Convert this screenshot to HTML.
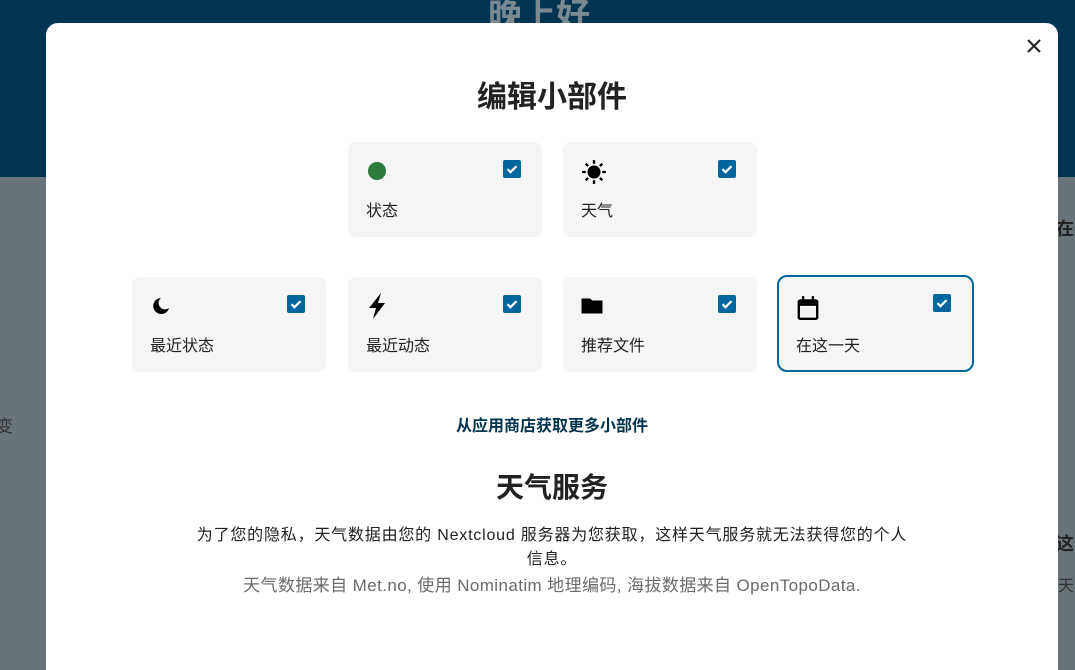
<!DOCTYPE html>
<html><head><meta charset="utf-8"><style>
*{margin:0;padding:0;box-sizing:border-box}
html,body{width:1075px;height:670px;overflow:hidden}
body{position:relative;font-family:"Liberation Sans","Noto Sans CJK SC",sans-serif;background:#69747a}
.top{position:absolute;left:0;top:0;width:1075px;height:177px;background:#003452}
.hello{position:absolute;left:488px;top:-12px;font-size:34px;font-weight:bold;color:#7a8890}
.bgt{position:absolute;color:#222;font-size:18px;white-space:nowrap}
.modal{position:absolute;left:46px;top:23px;width:1012px;height:647px;background:#fff;border-radius:12px 12px 0 0}
.close{position:absolute;left:1024px;top:36px}
h1{position:absolute;left:0;width:1104px;text-align:center;font-size:30px;font-weight:bold;color:#222;top:72px}
.card{position:absolute;width:194px;height:95px;background:#f5f5f5;border-radius:8px}
.card.sel{border:2px solid #00679e;background:#f5f5f5;width:197px;height:97px;border-radius:10px}
.card .ic{position:absolute;left:18px;top:18px;width:22px;height:22px}
.card .cb{position:absolute;left:155px;top:18px;width:18px;height:18px;background:#00679e;border-radius:2px}
.card .lb{position:absolute;left:18px;top:55px;font-size:16px;color:#222}
.sel .ic{left:17px;top:17px}.sel .cb{left:154px;top:17px}.sel .lb{left:17px;top:55px}
.link{position:absolute;left:0;width:1104px;text-align:center;top:412px;font-size:16px;font-weight:bold;color:#00334f}
h2{position:absolute;left:0;width:1104px;text-align:center;top:466px;font-size:28px;font-weight:bold;color:#222}
.p{position:absolute;left:0;width:1104px;text-align:center;top:524px;font-size:16px;line-height:24px;letter-spacing:0.8px;color:#222;white-space:nowrap}
.g{position:absolute;left:0;width:1104px;text-align:center;top:571px;font-size:17px;letter-spacing:0.4px;color:#6b6b6b;white-space:nowrap}
</style></head><body>
<div class="top"></div>
<div class="hello">晚上好</div>
<div class="bgt" style="left:-4px;top:412px;font-size:17px;color:#333">变</div>
<div class="bgt" style="left:1056px;top:215px;font-weight:bold">在这</div>
<div class="bgt" style="left:1056px;top:530px;font-weight:bold">这</div>
<div class="bgt" style="left:1058px;top:572px;font-size:16px;color:#333">天</div>
<div class="modal"></div>
<svg class="close" width="20" height="20" viewBox="0 0 20 20"><path d="M4 4L16 16M16 4L4 16" stroke="#222" stroke-width="2"/></svg>
<h1>编辑小部件</h1>
<svg width="0" height="0" style="position:absolute"><defs><symbol id="ck" viewBox="0 0 18 18"><path d="M4.5 9.2l3 3 6-6" stroke="#fff" stroke-width="2.2" fill="none"/></symbol></defs></svg>

<div class="card" style="left:348px;top:142px"><svg class="ic" viewBox="0 0 22 22"><circle cx="11" cy="11" r="9" fill="#2d7a3f"/></svg><svg class="cb"><use href="#ck"/></svg><div class="lb">状态</div></div>
<div class="card" style="left:563px;top:142px"><svg class="ic" style="width:26px;height:26px;top:17px" viewBox="0 0 22 22"><circle cx="11" cy="11" r="5.5" fill="#000"/><g stroke="#000" stroke-width="2"><path d="M11 1v3M11 18v3M1 11h3M18 11h3M4 4l2 2M16 16l2 2M4 18l2-2M16 6l2-2"/></g></svg><svg class="cb"><use href="#ck"/></svg><div class="lb">天气</div></div>

<div class="card" style="left:132px;top:277px"><svg class="ic" viewBox="0 0 22 22"><path d="M11 3a8 8 0 1 0 8 10a6 6 0 0 1 -8 -10z" fill="#000"/></svg><svg class="cb"><use href="#ck"/></svg><div class="lb">最近状态</div></div>
<div class="card" style="left:348px;top:277px"><svg class="ic" style="height:26px;top:16px" viewBox="0 0 22 26"><path d="M15 0L3 15h7l-3 11L19 10h-7z" fill="#000"/></svg><svg class="cb"><use href="#ck"/></svg><div class="lb">最近动态</div></div>
<div class="card" style="left:563px;top:277px"><svg class="ic" viewBox="0 0 22 22"><path d="M1 4h8l2 2h10v12H1z" fill="#000" stroke="#000" stroke-linejoin="round"/></svg><svg class="cb"><use href="#ck"/></svg><div class="lb">推荐文件</div></div>
<div class="card sel" style="left:777px;top:275px"><svg class="ic" style="width:24px;height:26px;top:18px" viewBox="0 0 22 24"><rect x="2.5" y="5" width="17" height="17" rx="1.5" fill="none" stroke="#000" stroke-width="2.2"/><rect x="2" y="5" width="18" height="5" fill="#000"/><path d="M6.5 1v5M15.5 1v5" stroke="#000" stroke-width="2.2"/></svg><svg class="cb"><use href="#ck"/></svg><div class="lb">在这一天</div></div>

<div class="link">从应用商店获取更多小部件</div>
<h2>天气服务</h2>
<div class="p">为了您的隐私，天气数据由您的 Nextcloud 服务器为您获取，这样天气服务就无法获得您的个人<br>信息。</div>
<div class="g">天气数据来自 Met.no, 使用 Nominatim 地理编码, 海拔数据来自 OpenTopoData.</div>
</body></html>
